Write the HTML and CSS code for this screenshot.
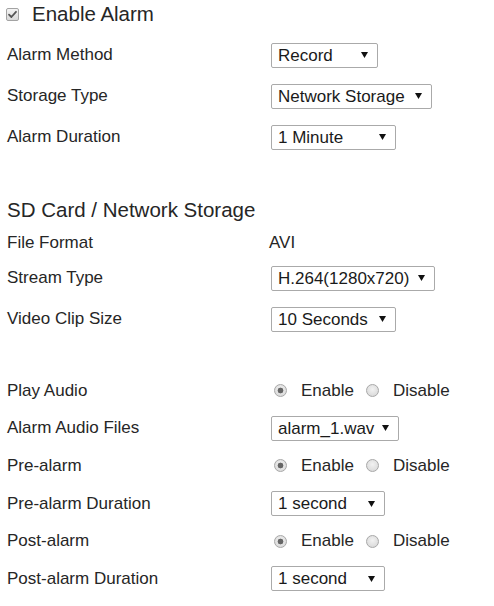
FILE: index.html
```html
<!DOCTYPE html>
<html lang="en">
<head>
<meta charset="utf-8">
<title>Alarm Settings</title>
<link rel="stylesheet" href="styles.css">
</head>
<body>
<div class="page">
  <label class="check-row">
    <input type="checkbox" class="chk" checked>
    <span>Enable Alarm</span>
  </label>

  <div class="grid sec1">
    <div class="lbl">Alarm Method</div>
    <div class="val"><select class="sel w-record"><option>Record</option></select></div>
    <div class="lbl">Storage Type</div>
    <div class="val"><select class="sel w-storage"><option>Network Storage</option></select></div>
    <div class="lbl">Alarm Duration</div>
    <div class="val"><select class="sel w-minute"><option>1 Minute</option></select></div>
  </div>

  <div class="heading">SD Card / Network Storage</div>

  <div class="grid sec2">
    <div class="lbl">File Format</div>
    <div class="val text-val">AVI</div>
    <div class="lbl">Stream Type</div>
    <div class="val"><select class="sel w-stream"><option>H.264(1280x720)</option></select></div>
    <div class="lbl">Video Clip Size</div>
    <div class="val"><select class="sel w-clip"><option>10 Seconds</option></select></div>
  </div>

  <div class="grid sec3">
    <div class="lbl">Play Audio</div>
    <div class="val radios">
      <label class="opt"><input type="radio" class="rad" name="play" checked>Enable</label>
      <label class="opt"><input type="radio" class="rad" name="play">Disable</label>
    </div>
    <div class="lbl">Alarm Audio Files</div>
    <div class="val"><select class="sel w-audio"><option>alarm_1.wav</option></select></div>
    <div class="lbl">Pre-alarm</div>
    <div class="val radios">
      <label class="opt"><input type="radio" class="rad" name="pre" checked>Enable</label>
      <label class="opt"><input type="radio" class="rad" name="pre">Disable</label>
    </div>
    <div class="lbl">Pre-alarm Duration</div>
    <div class="val"><select class="sel w-second"><option>1 second</option></select></div>
    <div class="lbl">Post-alarm</div>
    <div class="val radios">
      <label class="opt"><input type="radio" class="rad" name="post" checked>Enable</label>
      <label class="opt"><input type="radio" class="rad" name="post">Disable</label>
    </div>
    <div class="lbl">Post-alarm Duration</div>
    <div class="val"><select class="sel w-second"><option>1 second</option></select></div>
  </div>
</div>
</body>
</html>
```

FILE: styles.css
```css
html, body {
  margin: 0;
  padding: 0;
  background: #ffffff;
}

body {
  font-family: "Liberation Sans", Arial, sans-serif;
  font-size: 17px;
  color: #262626;
}

.page {
  padding-left: 7px;
  width: 480px;
}

.check-row {
  display: flex;
  align-items: center;
  height: 28px;
  gap: 13px;
  font-size: 20.5px;
  margin-left: -1px;
}

.chk {
  appearance: none;
  -webkit-appearance: none;
  width: 13px;
  height: 13px;
  margin: 0;
  border: 1px solid #a3a3a3;
  border-radius: 2px;
  background:
    url("data:image/svg+xml;utf8,<svg xmlns='http://www.w3.org/2000/svg' width='13' height='13' viewBox='0 0 13 13'><path d='M3 6.6 L5.4 9 L10 3.8' fill='none' stroke='%23555' stroke-width='1.8' stroke-linecap='round' stroke-linejoin='round'/></svg>") center / 13px 13px no-repeat,
    linear-gradient(#f4f4f4, #d9d9d9);
  box-sizing: border-box;
}

.grid {
  display: grid;
  grid-template-columns: 264px auto;
  align-items: center;
}

.sec1 {
  margin-top: 6.5px;
  grid-auto-rows: 41px;
}

.heading {
  margin-top: 38.5px;
  height: 28px;
  line-height: 28px;
  font-size: 20.5px;
}

.sec2 {
  margin-top: 1px;
  grid-template-rows: 36px 34px 48px;
}

.sec3 {
  margin-top: 29px;
  grid-auto-rows: 37.6px;
}

.lbl {
  white-space: nowrap;
}

.val {
  display: flex;
  align-items: center;
}

.text-val {
  margin-left: -2px;
}

.sel {
  appearance: none;
  -webkit-appearance: none;
  height: 25px;
  margin: 0;
  padding: 0 0 0 6px;
  border: 1px solid #aaaaaa;
  border-radius: 2px;
  box-sizing: border-box;
  font-family: "Liberation Sans", Arial, sans-serif;
  font-size: 17px;
  color: #1a1a1a;
  background: #ffffff url("data:image/svg+xml;utf8,<svg xmlns='http://www.w3.org/2000/svg' width='7' height='6' viewBox='0 0 7 6'><path d='M0 0 H7 L3.5 6 Z' fill='%23111'/></svg>") no-repeat right 9px center / 7px 6px;
}

.w-record { width: 107px; }
.w-storage { width: 161px; }
.w-minute { width: 125px; }
.w-stream { width: 164px; }
.w-clip { width: 125px; }
.w-audio { width: 128px; }
.w-second { width: 114px; }

.radios {
  gap: 9px;
}

.opt {
  display: flex;
  align-items: center;
  gap: 14px;
}

.rad {
  appearance: none;
  -webkit-appearance: none;
  width: 13px;
  height: 13px;
  margin: 0 0 0 3px;
  border: 1px solid #a8a8a8;
  border-radius: 50%;
  box-sizing: border-box;
  background: radial-gradient(circle at 50% 40%, #f2f2f2 0%, #d4d4d4 100%);
}

.rad:checked {
  background:
    radial-gradient(circle, #666666 0, #666666 2.6px, transparent 3.2px),
    radial-gradient(circle at 50% 40%, #f2f2f2 0%, #d4d4d4 100%);
}
```
